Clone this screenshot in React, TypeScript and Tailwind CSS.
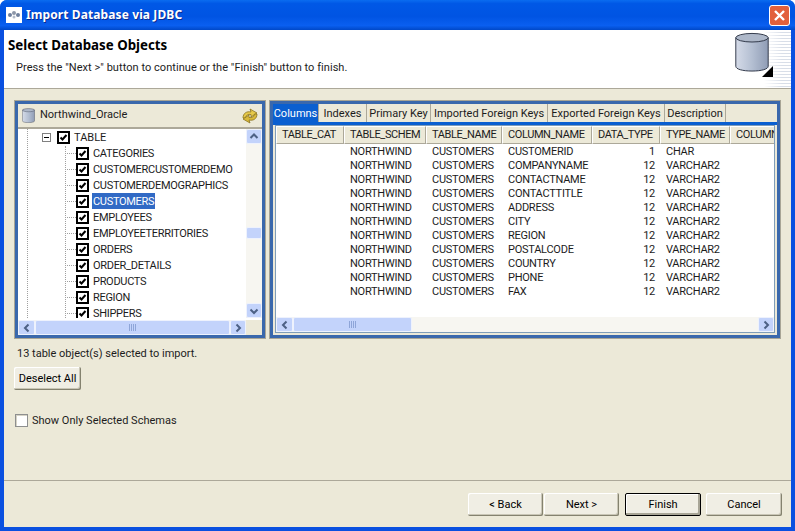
const font = "font-['Roboto','DejaVu_Sans',sans-serif]";
const bold = "font-['Noto_Sans','DejaVu_Sans',sans-serif] font-bold";

const treeRows = [
  "CATEGORIES",
  "CUSTOMERCUSTOMERDEMO",
  "CUSTOMERDEMOGRAPHICS",
  "CUSTOMERS",
  "EMPLOYEES",
  "EMPLOYEETERRITORIES",
  "ORDERS",
  "ORDER_DETAILS",
  "PRODUCTS",
  "REGION",
  "SHIPPERS",
];

const tabs = [
  { label: "Columns", w: "w-[46px]" },
  { label: "Indexes", w: "w-[48px]" },
  { label: "Primary Key", w: "w-[64px]" },
  { label: "Imported Foreign Keys", w: "w-[117px]" },
  { label: "Exported Foreign Keys", w: "w-[117px]" },
  { label: "Description", w: "w-[61px]" },
];

const columns = [
  { label: "TABLE_CAT", w: "w-[68px]" },
  { label: "TABLE_SCHEM", w: "w-[82px]" },
  { label: "TABLE_NAME", w: "w-[76px]" },
  { label: "COLUMN_NAME", w: "w-[90px]" },
  { label: "DATA_TYPE", w: "w-[68px]" },
  { label: "TYPE_NAME", w: "w-[70px]" },
  { label: "COLUMN_SIZE", w: "w-[46px]" },
];

const rows = [
  ["CUSTOMERID", "1", "CHAR"],
  ["COMPANYNAME", "12", "VARCHAR2"],
  ["CONTACTNAME", "12", "VARCHAR2"],
  ["CONTACTTITLE", "12", "VARCHAR2"],
  ["ADDRESS", "12", "VARCHAR2"],
  ["CITY", "12", "VARCHAR2"],
  ["REGION", "12", "VARCHAR2"],
  ["POSTALCODE", "12", "VARCHAR2"],
  ["COUNTRY", "12", "VARCHAR2"],
  ["PHONE", "12", "VARCHAR2"],
  ["FAX", "12", "VARCHAR2"],
];

function Cylinder({ className }: { className: string }) {
  return (
    <svg viewBox="0 0 36 42" className={className}>
      <defs>
        <linearGradient id="cyl" x1="0" x2="1" y1="0" y2="0">
          <stop offset="0" stopColor="#d5dbe8" />
          <stop offset="0.5" stopColor="#b4bfd2" />
          <stop offset="1" stopColor="#8f9cb5" />
        </linearGradient>
      </defs>
      <path d="M1 6 V36 C1 39 8 41 18 41 C28 41 35 39 35 36 V6 Z" fill="url(#cyl)" stroke="#2c3444" strokeWidth="1" />
      <ellipse cx="18" cy="6" rx="17" ry="4.5" fill="#aeb8c9" stroke="#2c3444" strokeWidth="1" />
    </svg>
  );
}

function Check({ size = "big" }: { size?: "big" | "empty" }) {
  if (size === "empty") {
    return <span className="block w-[13px] h-[13px] bg-white border border-[#8e8f8f] shadow-[inset_1px_1px_0_#d6d3c6]" />;
  }
  return (
    <span className="flex items-center justify-center w-[13px] h-[13px] shrink-0 bg-white border-2 border-black">
      <svg viewBox="0 0 9 9" className="w-[9px] h-[9px]">
        <path d="M1.500 4.500 L3.500 6.500 L7.500 2" fill="none" stroke="#000" strokeWidth="2" />
      </svg>
    </span>
  );
}

function Arrow({ dir, className = "" }: { dir: "up" | "down" | "left" | "right"; className?: string }) {
  const d = {
    up: "M2.500 7 L6 3.500 L9.500 7",
    down: "M2.500 4.500 L6 8 L9.500 4.500",
    left: "M7.500 2.500 L4 6 L7.500 9.500",
    right: "M4.500 2.500 L8 6 L4.500 9.500",
  }[dir];
  return (
    <span className={`flex items-center justify-center w-[15px] h-[15px] shrink-0 rounded-[2px] bg-[#c3d3fb] border border-[#eef2fd] ${className}`}>
      <svg viewBox="0 0 12 12" className="w-[12px] h-[12px]">
        <path d={d} fill="none" stroke="#4d6185" strokeWidth="2" />
      </svg>
    </span>
  );
}

function Grip() {
  return (
    <svg viewBox="0 0 8 7" className="w-[8px] h-[7px]">
      <path d="M0.500 0V7M2.500 0V7M4.500 0V7M6.500 0V7" stroke="#8ea5d8" strokeWidth="1" />
    </svg>
  );
}

function WizardButton({ label, def = false, className = "" }: { label: string; def?: boolean; className?: string }) {
  return (
    <button
      className={`h-[23px] pt-[1px] text-[11px] text-black bg-[#f0eee4] rounded-[2px] ${
        def
          ? "border border-black shadow-[inset_-2px_-2px_0_#a8a596,inset_1px_1px_0_#fff]"
          : "shadow-[inset_-1px_-1px_0_#84826f,inset_-2px_-2px_0_#c9c6b6,inset_1px_1px_0_#fff]"
      } ${className}`}
    >
      {label}
    </button>
  );
}

function TreePanel() {
  return (
    <div className="w-[250px] h-[237px] flex flex-col border-[3px] border-[#3a68ac] outline outline-1 outline-[#a8a596] bg-[#ece9d8]">
      <div className="h-[23px] shrink-0 flex items-center pl-[4px] pr-[3px]">
        <Cylinder className="w-[13px] h-[15px] mr-[5px]" />
        <span className="flex-1 text-[11px] text-[#1c1c1c]">Northwind_Oracle</span>
        <svg viewBox="0 0 18 18" className="w-[18px] h-[18px]">
          <path d="M2 11 C2 6 6 4 10 5 L9 2 L16 6 L10 10 L10 7.500 C7 7 5 8 4.500 11 Z" fill="#e6c94a" stroke="#8a7420" strokeWidth="0.8" />
          <path d="M16 7 C16 12 12 14 8 13 L9 16 L2 12 L8 8 L8 10.500 C11 11 13 10 13.500 7 Z" fill="#d9b93a" stroke="#8a7420" strokeWidth="0.8" />
        </svg>
      </div>
      <div className="h-[2px] shrink-0 bg-[#aca899]" />
      <div className="flex-1 min-h-0 flex bg-white">
        <div className="flex-1 min-w-0 h-[189px] overflow-hidden relative">
          <div className="absolute left-[9px] top-0 bottom-0 border-l border-dotted border-[#a0a0a0]" />
          <div className="absolute left-[47px] top-[17px] bottom-0 border-l border-dotted border-[#a0a0a0]" />
          <div className="h-[16px] flex items-center pl-[24px] text-[11px] text-[#1c1c1c]">
            <span className="flex items-center justify-center w-[9px] h-[9px] border border-[#808080] bg-white mr-[6px]">
              <span className="w-[5px] h-px bg-black" />
            </span>
            <Check />
            <span className="ml-[4px] pt-[2px]">TABLE</span>
          </div>
          {treeRows.map((name) => (
            <div key={name} className="h-[16px] flex items-center pl-[47px] text-[11px] text-[#1c1c1c]">
              <span className="w-[11px] shrink-0 border-t border-dotted border-[#a0a0a0]" />
              <Check />
              <span
                className={`ml-[3px] px-[1px] h-[16px] leading-[18px] tracking-[-0.3px] whitespace-nowrap ${
                  name === "CUSTOMERS" ? "bg-[#316ac5] text-white" : ""
                }`}
              >
                {name}
              </span>
            </div>
          ))}
        </div>
        <div className="w-[16px] h-[189px] shrink-0 flex flex-col bg-[#f7f6f1]">
          <Arrow dir="up" className="w-[16px]" />
          <div className="flex-1 pt-[83px]">
            <div className="h-[12px] rounded-[2px] bg-[#c3d3fb] border border-[#eef2fd]" />
          </div>
          <Arrow dir="down" className="w-[16px]" />
        </div>
      </div>
      <div className="h-[15px] shrink-0 flex">
        <div className="flex-1 min-w-0 flex bg-[#f7f6f1]">
          <Arrow dir="left" className="w-[17px]" />
          <div className="flex-1 flex items-center justify-center rounded-[2px] bg-[#c3d3fb] border border-[#eef2fd]">
            <Grip />
          </div>
          <Arrow dir="right" className="w-[16px]" />
        </div>
        <div className="w-[16px] shrink-0" />
      </div>
    </div>
  );
}

function ColumnsPanel() {
  return (
    <div className="w-[510px] h-[237px] flex flex-col border-[3px] border-[#3a68ac] outline outline-1 outline-[#a8a596] bg-[#ece9d8]">
      <div className="h-[18px] shrink-0 flex text-[11px] text-[#1c1c1c]">
        {tabs.map((t, i) => (
          <div
            key={t.label}
            className={`${t.w} pt-[2px] flex items-center justify-center whitespace-nowrap border-r border-[#aca899] ${
              i === 0 ? "bg-[#0a5fd0] text-white" : ""
            }`}
          >
            {t.label}
          </div>
        ))}
      </div>
      <div className="h-[3px] shrink-0 bg-[#0a5fd0]" />
      <div className="flex-1 min-h-0 flex flex-col bg-white ml-[2px] mr-[2px] mb-[2px] border border-[#7f9db9] overflow-hidden">
        <div className="h-[18px] shrink-0 flex overflow-hidden bg-[#ece9d8] text-[11px] tracking-[-0.4px] text-[#1c1c1c]">
          {columns.map((c) => (
            <div
              key={c.label}
              className={`${c.w} shrink-0 flex items-center pl-[5px] overflow-hidden whitespace-nowrap border-t border-l border-t-white border-l-white border-r border-b border-r-[#aca899] border-b-[#aca899]`}
            >
              {c.label}
            </div>
          ))}
        </div>
        <div className="flex-1 min-h-0 pt-[1px] text-[11px] tracking-[-0.25px] text-[#1c1c1c]">
          {rows.map(([col, type, name]) => (
            <div key={col} className="h-[14px] flex items-center whitespace-nowrap">
              <span className="w-[68px]" />
              <span className="w-[82px] pl-[6px]">NORTHWIND</span>
              <span className="w-[76px] pl-[6px]">CUSTOMERS</span>
              <span className="w-[90px] pl-[6px]">{col}</span>
              <span className="w-[68px] pr-[5px] text-right">{type}</span>
              <span className="w-[70px] pl-[6px]">{name}</span>
            </div>
          ))}
        </div>
        <div className="h-[15px] shrink-0 flex bg-[#f7f6f1]">
          <Arrow dir="left" className="w-[17px]" />
          <div className="w-[119px] flex items-center justify-center rounded-[2px] bg-[#c3d3fb] border border-[#eef2fd]">
            <Grip />
          </div>
          <div className="flex-1" />
          <Arrow dir="right" className="w-[16px]" />
        </div>
      </div>
    </div>
  );
}

export default function App() {
  return (
    <div className={`w-[795px] h-[531px] flex flex-col overflow-hidden rounded-t-[7px] bg-[#0a50e0] ${font}`}>
      {/* Title bar */}
      <div className="h-[30px] shrink-0 flex items-center pl-[6px] pr-[5px] bg-[linear-gradient(180deg,#0a6cf0_0%,#0058e6_12%,#0054e3_55%,#0a5ff0_85%,#0048c8_100%)]">
        <span className="flex items-center justify-center w-[16px] h-[16px] bg-white mr-[4px]">
          <svg viewBox="0 0 16 16" className="w-[16px] h-[16px]">
            <circle cx="4" cy="8" r="2" fill="#6e7f9c" />
            <circle cx="8" cy="6" r="2" fill="#8d97a8" />
            <circle cx="12" cy="8" r="2" fill="#6e7f9c" />
            <circle cx="8" cy="10" r="1.500" fill="#b4bcc9" />
          </svg>
        </span>
        <span className={`flex-1 text-[12px] tracking-[0.1px] text-white [text-shadow:1px_1px_0_#0a2a90] ${bold}`}>Import Database via JDBC</span>
        <span className="flex items-center justify-center w-[21px] h-[21px] rounded-[3px] bg-[#e2603c] border border-white">
          <svg viewBox="0 0 13 13" className="w-[13px] h-[13px]">
            <path d="M2 2 L11 11 M11 2 L2 11" stroke="#fff" strokeWidth="2.400" />
          </svg>
        </span>
      </div>

      <div className="flex-1 min-h-0 flex flex-col mx-[4px] mb-[4px] bg-[#ece9d8]">
        {/* Banner */}
        <div className="h-[59px] shrink-0 flex bg-white border-b border-[#aca899] relative">
          <div className="flex-1 pl-[4px] pt-[6px]">
            <div className={`text-[13.300px] leading-[18px] text-black ${bold}`}>Select Database Objects</div>
            <div className="mt-[6px] pl-[8px] text-[11px] leading-[15px] tracking-[0.05px] text-[#1c1c1c]">
              Press the "Next &gt;" button to continue or the "Finish" button to finish.
            </div>
          </div>
          <div className="w-[60px] relative bg-[linear-gradient(90deg,#fff_55%,transparent_85%),repeating-linear-gradient(180deg,#ffffff_0px,#ffffff_2px,#d8dee8_2px,#d8dee8_3px)]">
            <Cylinder className="absolute left-[3px] top-[2px] w-[36px] h-[40px]" />
            <svg viewBox="0 0 10 10" className="absolute left-[31px] top-[36px] w-[11px] h-[11px]">
              <path d="M10 0 V10 H0 Z" fill="#000" />
            </svg>
          </div>
        </div>

        {/* Panels */}
        <div className="flex gap-[5px] pl-[11px] pt-[12px] shrink-0">
          <TreePanel />
          <ColumnsPanel />
        </div>

        <div className="pl-[13px] mt-[8px] text-[11px] leading-[15px] text-[#1c1c1c]">13 table object(s) selected to import.</div>
        <div className="pl-[10px] mt-[4px]">
          <WizardButton label="Deselect All" className="w-[67px]" />
        </div>
        <div className="pl-[11px] mt-[24px] flex items-center gap-[4px] text-[11px] leading-[13px] text-[#1c1c1c]">
          <Check size="empty" />
          <span>Show Only Selected Schemas</span>
        </div>

        <div className="flex-1" />
        {/* Footer */}
        <div className="h-[47px] shrink-0 border-t border-[#aca899] flex items-start justify-end pt-[12px] pr-[9px]">
          <WizardButton label="< Back" className="w-[75px] mr-[1px]" />
          <WizardButton label="Next >" className="w-[75px] mr-[6px]" />
          <WizardButton label="Finish" def className="w-[76px] mr-[5px]" />
          <WizardButton label="Cancel" className="w-[76px]" />
        </div>
      </div>
    </div>
  );
}
